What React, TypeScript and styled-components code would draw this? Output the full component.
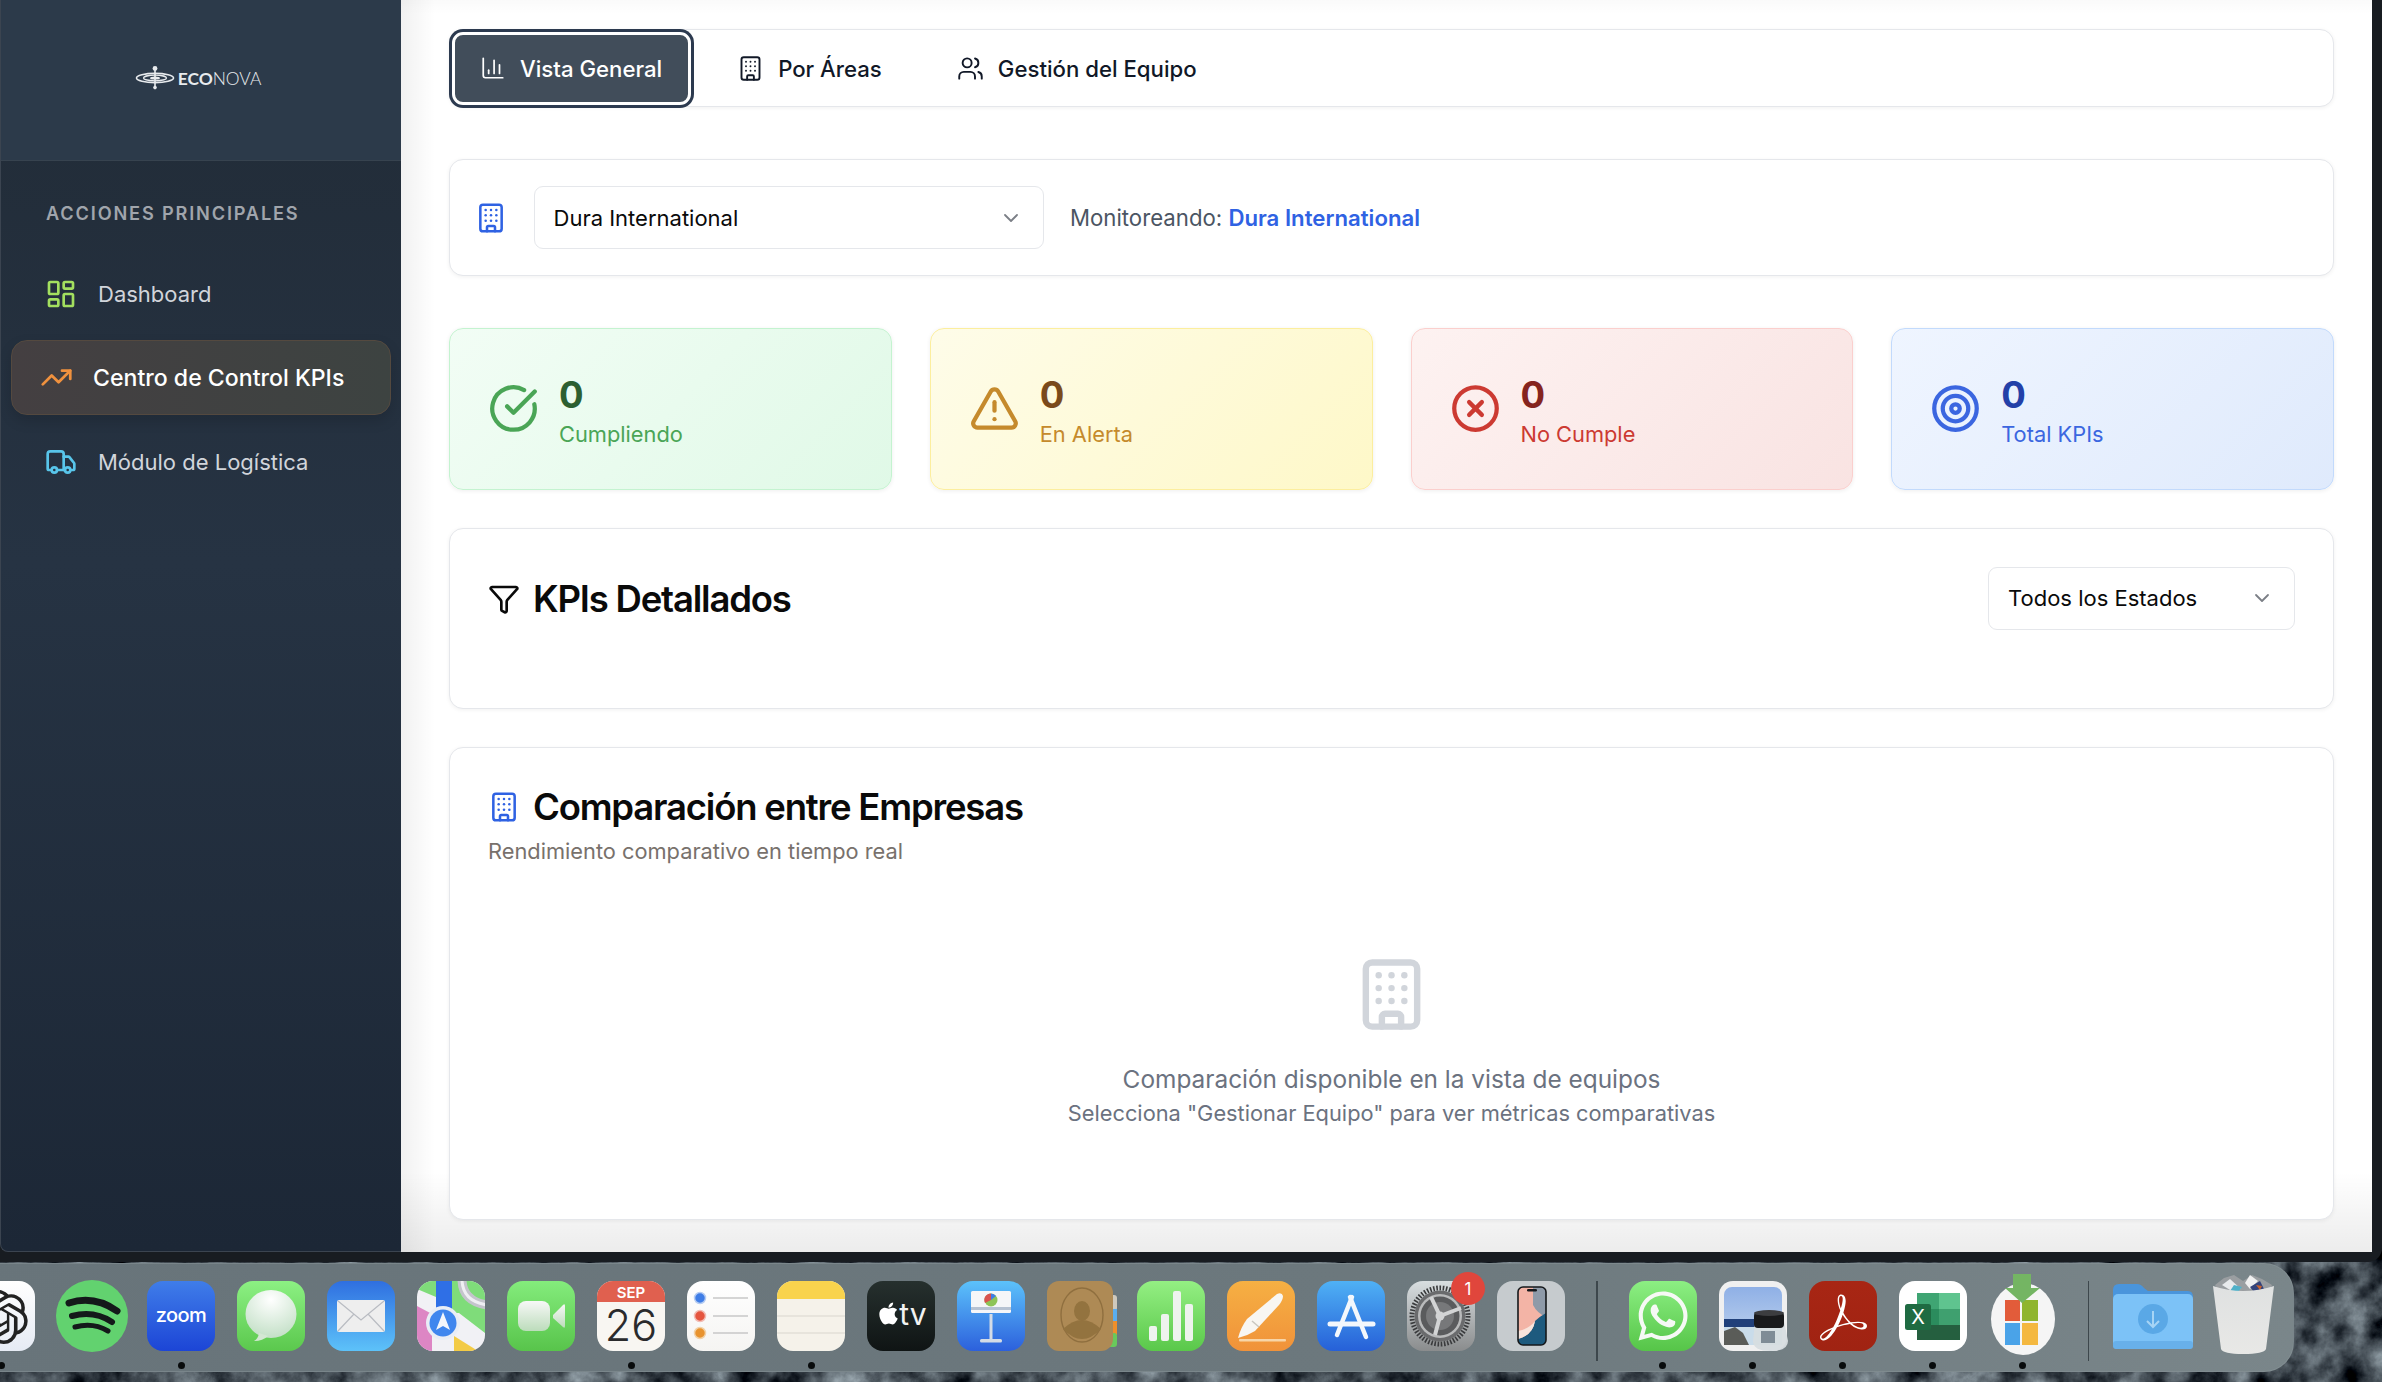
import React from 'react'
import styled, { createGlobalStyle } from 'styled-components'
import {
  Building,
  ChartColumn,
  ChevronDown,
  CircleCheckBig,
  CircleX,
  Funnel,
  LayoutDashboard,
  Target,
  TrendingUp,
  TriangleAlert,
  Truck,
  Users,
} from 'lucide-react'
import { FaApple, FaWhatsapp } from 'react-icons/fa'
import { SiAdobeacrobatreader, SiOpenai } from 'react-icons/si'

const GlobalStyle = createGlobalStyle`
  html, body {
    margin: 0;
    padding: 0;
    width: 2382px;
    height: 1382px;
    overflow: hidden;
    background: #2a363b;
    font-family: Inter, "Liberation Sans", sans-serif;
  }
`

const Screen = styled.div`
  position: relative;
  width: 2382px;
  height: 1382px;
  overflow: hidden;
  display: flex;
  flex-direction: column;
  background: #2c383d;
`
const Wallpaper = styled.svg`
  position: absolute;
  inset: 0;
  width: 100%;
  height: 100%;
`
const Window = styled.div`
  position: relative;
  display: flex;
  height: 1252px;
  padding-right: 10px;
  border-bottom: 10px solid #181c21;
  border-bottom-right-radius: 14px;
  background: #181c21;
`
const Sidebar = styled.aside`
  width: 401px;
  flex-shrink: 0;
  display: flex;
  flex-direction: column;
  box-sizing: border-box;
  border-left: 1px solid #3b4450;
  border-bottom: 1px solid #3b4450;
  border-bottom-left-radius: 8px;
  background: linear-gradient(180deg, #212b36 0%, #263343 45%, #1c2736 100%);
`
const SidebarHeader = styled.div`
  height: 161px;
  flex-shrink: 0;
  display: flex;
  align-items: center;
  justify-content: center;
  gap: 3px;
  padding-right: 6px;
  padding-bottom: 4px;
  box-sizing: border-box;
  background: #2c3a4a;
  border-bottom: 1px solid #37434f;
`
const LogoText = styled.span`
  font-family: Lato, Inter, sans-serif;
  font-size: 17.4px;
  font-weight: 300;
  color: #e8ebee;

  b {
    font-weight: 700;
  }
`
const SectionLabel = styled.div`
  margin: 41px 0 32px 45px;
  font-size: 18.2px;
  line-height: 22px;
  font-weight: 600;
  letter-spacing: 0.1em;
  color: #a0a5ac;
  text-transform: uppercase;
`
const Nav = styled.nav`
  display: flex;
  flex-direction: column;
  gap: 9px;
  padding: 0 10px;
`
const NavItem = styled.div<{ $active?: boolean }>`
  height: 75px;
  box-sizing: border-box;
  display: flex;
  align-items: center;
  gap: ${(p) => (p.$active ? '20px' : '21px')};
  padding-left: ${(p) => (p.$active ? '28px' : '33px')};
  border-radius: 16px;
  font-size: ${(p) => (p.$active ? '23.1px' : '22px')};
  font-weight: ${(p) => (p.$active ? 500 : 400)};
  color: ${(p) => (p.$active ? '#ffffff' : '#d1d5db')};
  border: 1px solid ${(p) => (p.$active ? '#54493f' : 'transparent')};
  background: ${(p) => (p.$active ? 'linear-gradient(90deg, #443f41, #3d4341)' : 'transparent')};
  box-shadow: ${(p) => (p.$active ? '0 6px 14px rgba(0, 0, 0, 0.14)' : 'none')};
`
const Main = styled.main`
  flex: 1;
  min-width: 0;
  display: flex;
  flex-direction: column;
  gap: 38px;
  padding: 29px 38px 0 48px;
  box-sizing: border-box;
  background: linear-gradient(to top, rgba(0, 0, 0, 0.075), transparent 80px),
    linear-gradient(to right, rgba(0, 0, 0, 0.055), transparent 34px),
    linear-gradient(to bottom, rgba(0, 0, 0, 0.02), transparent 14px), #ffffff;
`
const Card = styled.section`
  box-sizing: border-box;
  background: #ffffff;
  border: 1.5px solid #e5e7eb;
  border-radius: 14px;
  box-shadow: 0 1px 4px rgba(0, 0, 0, 0.06);
`
const TabsCard = styled(Card)`
  height: 78px;
  flex-shrink: 0;
  margin-bottom: 14px;
  display: flex;
  gap: 15px;
`
const Tab = styled.div<{ $active?: boolean }>`
  display: flex;
  align-items: center;
  gap: 14px;
  padding: 0 30px;
  box-sizing: border-box;
  font-size: 22.2px;
  font-weight: 500;
  color: ${(p) => (p.$active ? '#ffffff' : '#111827')};
  ${(p) =>
    p.$active &&
    `
    margin: 1.5px;
    padding: 0 25.5px;
    background: #414d5a;
    border-radius: 11px;
    border: 3px solid #ffffff;
    box-shadow: 0 0 0 3px #2c3a4f;
  `}
`
const CompanyCard = styled(Card)`
  height: 117px;
  flex-shrink: 0;
  margin-bottom: 13.5px;
  display: flex;
  align-items: center;
  gap: 26.5px;
  padding-left: 25px;
`
const SelectBox = styled.div<{ $width: number }>`
  width: ${(p) => p.$width}px;
  height: 63px;
  box-sizing: border-box;
  display: flex;
  align-items: center;
  justify-content: space-between;
  padding: 0 20px 0 19px;
  border: 1.5px solid #e5e7eb;
  border-radius: 9px;
  background: #ffffff;
  font-size: 22px;
  color: #0a0a0a;
`
const Monitor = styled.div`
  font-size: 22.2px;
  color: #4b5563;

  strong {
    font-weight: 600;
    color: #2f62e3;
  }
`
const StatsGrid = styled.div`
  display: grid;
  grid-template-columns: repeat(4, 1fr);
  gap: 38px;
  height: 162px;
  flex-shrink: 0;
`
const tones = {
  green: { from: '#f2fdf5', to: '#e0f9e7', border: '#c4f3d0', num: '#2c5f31', label: '#4aa556' },
  yellow: { from: '#fefce9', to: '#fef8c8', border: '#fcee9e', num: '#7a4a1b', label: '#c58a2c' },
  red: { from: '#fdf2f1', to: '#f9e3e2', border: '#fbcfcd', num: '#85241e', label: '#cc3a32' },
  blue: { from: '#eff5ff', to: '#dfeafc', border: '#c2dafc', num: '#2340a8', label: '#3b66e0' },
}
type Tone = keyof typeof tones

const StatCard = styled.div<{ $tone: Tone }>`
  box-sizing: border-box;
  display: flex;
  align-items: center;
  gap: 20px;
  padding-left: 38px;
  border-radius: 14px;
  border: 1.5px solid ${(p) => tones[p.$tone].border};
  background: linear-gradient(135deg, ${(p) => tones[p.$tone].from}, ${(p) => tones[p.$tone].to});
  box-shadow: 0 1px 4px rgba(0, 0, 0, 0.07);
  color: ${(p) => tones[p.$tone].label};
`
const StatBody = styled.div`
  display: flex;
  flex-direction: column;
  gap: 2px;
  padding-top: 4px;
`
const StatNumber = styled.div<{ $tone: Tone }>`
  font-size: 36.5px;
  line-height: 44px;
  font-weight: 700;
  color: ${(p) => tones[p.$tone].num};
`
const StatLabel = styled.div`
  font-size: 21.8px;
  line-height: 30px;
`
const KpiCard = styled(Card)`
  height: 181px;
  flex-shrink: 0;
  display: flex;
  justify-content: space-between;
  align-items: flex-start;
  padding: 38px 38px 0 38px;
`
const TitleRow = styled.div`
  display: flex;
  align-items: center;
  gap: 13px;
  min-height: 44px;
  color: #0a0a0a;
`
const KpiTitleRow = styled(TitleRow)`
  min-height: 65px;
`
const CardTitle = styled.h2`
  margin: 0;
  font-size: 36.5px;
  line-height: 44px;
  font-weight: 600;
  letter-spacing: -0.033em;
  color: #0a0a0a;
`
const CompareCard = styled(Card)`
  height: 473px;
  flex-shrink: 0;
  display: flex;
  flex-direction: column;
  padding: 37px 38px 0 38px;
`
const SubTitle = styled.div`
  margin-top: 7.5px;
  font-size: 21.8px;
  line-height: 30px;
  color: #78716c;
`
const Empty = styled.div`
  margin-top: 90px;
  display: flex;
  flex-direction: column;
  align-items: center;
  color: #6b7280;
`
const EmptyTitle = styled.div`
  margin-top: 28px;
  font-size: 24.4px;
  line-height: 36px;
`
const EmptyHint = styled.div`
  font-size: 21.8px;
  line-height: 32px;
`
const Dock = styled.div`
  position: relative;
  width: 2354px;
  height: 109px;
  margin-top: 1px;
  margin-left: -60px;
  padding: 17px 0 0 26px;
  box-sizing: border-box;
  display: flex;
  gap: 22px;
  border: 1.5px solid #8a959982;
  border-radius: 0 30px 30px 0;
  background: linear-gradient(90deg, #68747a 0%, #6c787d 60%, #7a868a 100%);
`
const DockItem = styled.div`
  position: relative;
  width: 68px;
  flex-shrink: 0;
  display: flex;
  flex-direction: column;
  align-items: center;
  gap: 11px;

  svg {
    overflow: visible;
    display: block;
  }
`
const RunDot = styled.span<{ $on?: boolean }>`
  width: 7px;
  height: 7px;
  border-radius: 50%;
  background: ${(p) => (p.$on ? '#080b0c' : 'transparent')};
`
const DockDivider = styled.div`
  width: 1.5px;
  height: 80px;
  margin: 0 9px;
  flex-shrink: 0;
  background: #3d474c;
`
const Badge = styled.span`
  position: absolute;
  top: -9px;
  right: -10px;
  width: 34px;
  height: 33px;
  border-radius: 50%;
  display: flex;
  align-items: center;
  justify-content: center;
  background: #e0463c;
  color: #ffffff;
  font-size: 17px;
`

const EconovaMark = () => (
  <svg width="40" height="24" viewBox="0 0 40 24" fill="none">
    <ellipse cx="20" cy="12" rx="18.5" ry="4.6" stroke="#e8ebee" strokeWidth="1.6" />
    <ellipse cx="20" cy="12" rx="11.5" ry="2.8" stroke="#e8ebee" strokeWidth="1.3" />
    <ellipse cx="20" cy="12" rx="5" ry="1.6" fill="#e8ebee" />
    <circle cx="20" cy="2.4" r="2.4" fill="#e8ebee" />
    <rect x="19.2" y="3" width="1.6" height="19" fill="#e8ebee" />
    <circle cx="20" cy="21.6" r="1.8" fill="#e8ebee" />
  </svg>
)

type TileProps = { id: string; from: string; to: string; children?: React.ReactNode }
const Tile = ({ id, from, to, children }: TileProps) => (
  <svg width="68" height="70" viewBox="0 0 68 70">
    <defs>
      <linearGradient id={id} x1="0" y1="0" x2="0" y2="1">
        <stop offset="0" stopColor={from} />
        <stop offset="1" stopColor={to} />
      </linearGradient>
    </defs>
    <rect width="68" height="70" rx="16" fill={`url(#${id})`} />
    {children}
  </svg>
)

const SpotifyIcon = () => (
  <svg width="68" height="70" viewBox="0 0 68 70" fill="none">
    <ellipse cx="35" cy="35" rx="36" ry="36" fill="#62d26f" />
    <g stroke="#14191a" strokeLinecap="round">
      <path d="M12 22 Q37 14 60 30" strokeWidth="7" />
      <path d="M15 35 Q37 29 55 41" strokeWidth="6" />
      <path d="M18 46 Q36 41 51 50" strokeWidth="5" />
    </g>
  </svg>
)

const dockApps: { name: string; on?: boolean; badge?: string; icon: React.ReactNode; divider?: boolean }[] = [
  {
    name: 'chatgpt',
    on: true,
    icon: (
      <Tile id="gpt" from="#ffffff" to="#e6ebf4">
        <SiOpenai x="7" y="9" size={54} color="#222" />
      </Tile>
    ),
  },
  { name: 'spotify', icon: <SpotifyIcon /> },
  {
    name: 'zoom',
    on: true,
    icon: (
      <Tile id="zoom" from="#3f7de9" to="#1c45d6">
        <text x="34" y="41" textAnchor="middle" fontFamily="Inter" fontSize="20" fontWeight="500" fill="#fff" letterSpacing="-0.6">
          zoom
        </text>
      </Tile>
    ),
  },
  {
    name: 'messages',
    icon: (
      <Tile id="msg" from="#8cf083" to="#5bc84d">
        <defs>
          <radialGradient id="bubble" cx="0.5" cy="0.2" r="0.9">
            <stop offset="0" stopColor="#ffffff" />
            <stop offset="1" stopColor="#bcdcc0" />
          </radialGradient>
        </defs>
        <ellipse cx="34" cy="33" rx="25.5" ry="24" fill="url(#bubble)" />
        <path d="M22 52 Q21 58 17 60 Q26 60 31 55Z" fill="#d4e7d4" />
      </Tile>
    ),
  },
  {
    name: 'mail',
    icon: (
      <Tile id="mail" from="#2f6fe0" to="#5dc2f9">
        <rect x="10" y="19" width="48" height="32" rx="2" fill="#eeeeee" />
        <path d="M11 20 L34 39 L57 20 M11 50 L27 33 M57 50 L41 33" stroke="#b9bcc2" strokeWidth="1.2" fill="none" />
      </Tile>
    ),
  },
  {
    name: 'maps',
    icon: (
      <svg width="68" height="70" viewBox="0 0 68 70">
        <defs>
          <clipPath id="mapclip">
            <rect width="68" height="70" rx="16" />
          </clipPath>
        </defs>
        <g clipPath="url(#mapclip)">
          <rect width="68" height="70" fill="#f1f1f5" />
          <path d="M0 0 H19 V16 L0 8Z" fill="#7fdc7a" />
          <path d="M35 0 H68 V52 L42 32 H35Z" fill="#7fdc7a" />
          <path d="M0 25 L15 33 V70 H0Z" fill="#dd86c4" />
          <path d="M37 70 V55 L61 70Z" fill="#f3cb45" />
          <rect x="19" y="0" width="16" height="34" fill="#2f6fe6" />
          <path d="M45 -2 Q45 20 70 24" stroke="#c4c4cc" strokeWidth="9" fill="none" />
          <path d="M45 -2 Q45 20 70 24" stroke="#efeff3" strokeWidth="3" fill="none" />
          <circle cx="26" cy="42" r="17" fill="#e9edf5" />
          <circle cx="26" cy="42" r="13.5" fill="#3f86ee" />
          <path d="M26 31 L33 49 L26 45 L19 49Z" fill="#f3f6fb" />
        </g>
      </svg>
    ),
  },
  {
    name: 'facetime',
    icon: (
      <Tile id="ft" from="#84ec7c" to="#58c44b">
        <defs>
          <linearGradient id="ftcam" x1="0" y1="0" x2="0" y2="1">
            <stop offset="0" stopColor="#f7f8f7" />
            <stop offset="1" stopColor="#bcdcbb" />
          </linearGradient>
        </defs>
        <rect x="11" y="20" width="32" height="30" rx="8" fill="url(#ftcam)" />
        <path d="M46 34 L56 24 Q58 22 58 25 V45 Q58 48 56 46 L46 37Z" fill="url(#ftcam)" />
      </Tile>
    ),
  },
  {
    name: 'calendar',
    on: true,
    icon: (
      <svg width="68" height="70" viewBox="0 0 68 70">
        <defs>
          <clipPath id="calclip">
            <rect width="68" height="70" rx="16" />
          </clipPath>
        </defs>
        <g clipPath="url(#calclip)">
          <rect width="68" height="70" fill="#f8f6f2" />
          <rect width="68" height="21" fill="#e0604f" />
          <text x="34" y="17" textAnchor="middle" fontFamily="Inter" fontSize="15" fontWeight="600" fill="#fff">
            SEP
          </text>
          <text x="34" y="60" textAnchor="middle" fontFamily="Inter" fontSize="43" fontWeight="300" fill="#2a2a2c">
            26
          </text>
        </g>
      </svg>
    ),
  },
  {
    name: 'reminders',
    icon: (
      <Tile id="rem" from="#ffffff" to="#f5f4f2">
        <circle cx="13" cy="17" r="5.5" fill="#3f7de6" stroke="#b7cdf2" strokeWidth="1.5" />
        <circle cx="13" cy="35" r="5.5" fill="#e5553f" stroke="#f2bdb5" strokeWidth="1.5" />
        <circle cx="13" cy="52" r="5.5" fill="#e8932f" stroke="#f2d2a8" strokeWidth="1.5" />
        <path d="M26 17 H61 M26 35 H61 M26 52 H61" stroke="#c8c8c8" strokeWidth="1.5" />
      </Tile>
    ),
  },
  {
    name: 'notes',
    on: true,
    icon: (
      <svg width="68" height="70" viewBox="0 0 68 70">
        <defs>
          <clipPath id="noteclip">
            <rect width="68" height="70" rx="16" />
          </clipPath>
        </defs>
        <g clipPath="url(#noteclip)">
          <rect width="68" height="70" fill="#f5f2ea" />
          <rect width="68" height="18" fill="#f9d34d" />
          <path d="M0 35 H68 M0 52 H68" stroke="#d9d6cd" strokeWidth="1.2" />
        </g>
      </svg>
    ),
  },
  {
    name: 'tv',
    icon: (
      <Tile id="tv" from="#26302e" to="#0f1414">
        <FaApple x="9" y="20" size={25} color="#fff" />
        <text x="46" y="44" textAnchor="middle" fontFamily="Inter" fontSize="30" fontWeight="400" fill="#f2f2f2">
          tv
        </text>
      </Tile>
    ),
  },
  {
    name: 'keynote',
    icon: (
      <Tile id="key" from="#5cc2fb" to="#2c60dc">
        <rect x="14" y="10" width="40" height="22" rx="1.5" fill="#f5f6f8" />
        <rect x="14" y="26" width="40" height="3" fill="#b6c2d2" />
        <circle cx="34" cy="19" r="6.5" fill="#8dc457" />
        <path d="M34 19 V12.5 A6.5 6.5 0 0 0 28 22Z" fill="#d9534f" />
        <path d="M34 19 V12.5 A6.5 6.5 0 0 1 39 15Z" fill="#3f7de6" />
        <rect x="32.5" y="33" width="3" height="26" fill="#d4dce6" />
        <rect x="23" y="58" width="22" height="3.5" rx="1.5" fill="#d4dce6" />
      </Tile>
    ),
  },
  {
    name: 'contacts',
    icon: (
      <svg width="68" height="70" viewBox="0 0 68 70">
        <rect x="60" y="14" width="10" height="16" rx="3" fill="#cfc9bd" />
        <rect x="60" y="28" width="10" height="14" fill="#5aaef0" />
        <rect x="60" y="40" width="10" height="14" fill="#ee8f2b" />
        <rect x="60" y="52" width="10" height="14" rx="3" fill="#69c95b" />
        <rect width="66" height="70" rx="12" fill="#ae8a55" />
        <ellipse cx="35" cy="34" rx="21" ry="27" fill="none" stroke="#8f6f3f" strokeWidth="1.4" />
        <ellipse cx="35" cy="30" rx="8" ry="10" fill="#93733f" />
        <path d="M16 48 Q35 30 54 48 Q35 68 16 48Z" fill="#93733f" />
      </svg>
    ),
  },
  {
    name: 'numbers',
    icon: (
      <Tile id="num" from="#94ef83" to="#5ac84a">
        <rect x="12" y="45" width="8" height="15" rx="2" fill="#eef3ee" />
        <rect x="24" y="33" width="8" height="27" rx="2" fill="#eef3ee" />
        <rect x="36" y="10" width="8" height="50" rx="2" fill="#eef3ee" />
        <rect x="48" y="23" width="8" height="37" rx="2" fill="#eef3ee" />
      </Tile>
    ),
  },
  {
    name: 'pages',
    icon: (
      <Tile id="pag" from="#f6b043" to="#f0923a">
        <path d="M11 57 Q14 46 20 38 L50 13 Q55 11 56 15 Q56 19 52 24 L28 50 Q20 55 11 57Z" fill="#f8f6f2" />
        <path d="M25 40 L32 46" stroke="#c9c6bf" strokeWidth="1.5" />
        <rect x="12" y="58" width="47" height="2.5" rx="1" fill="#f7d5a8" />
      </Tile>
    ),
  },
  {
    name: 'appstore',
    icon: (
      <Tile id="app" from="#4fb1f5" to="#2660d8">
        <g stroke="#f3f7fc" strokeLinecap="round" fill="none">
          <path d="M35 16 L20 54" strokeWidth="4.5" />
          <path d="M33 16 L49 56" strokeWidth="4.5" />
          <path d="M13 43 H56" strokeWidth="5" />
        </g>
      </Tile>
    ),
  },
  {
    name: 'settings',
    badge: '1',
    icon: (
      <Tile id="set" from="#d8dee0" to="#8a8c8d">
        <circle cx="33" cy="35" r="28" fill="none" stroke="#3a3b3d" strokeWidth="5" strokeDasharray="1.6 1.6" />
        <circle cx="33" cy="35" r="25.5" fill="#6a6b6d" />
        <circle cx="33" cy="35" r="22" fill="#b9babb" />
        <circle cx="33" cy="35" r="19.5" fill="#5a5b5d" />
        <circle cx="33" cy="35" r="14" fill="#77787a" />
        <path d="M33 35 L24 16 M33 35 L54 27 M33 35 L28 54" stroke="#d3d4d5" strokeWidth="4" />
        <circle cx="33" cy="35" r="4.5" fill="#d3d4d5" />
      </Tile>
    ),
  },
  {
    name: 'iphone',
    icon: (
      <svg width="68" height="70" viewBox="0 0 68 70">
        <defs>
          <clipPath id="iphclip">
            <rect x="21" y="6" width="28" height="58" rx="5" />
          </clipPath>
        </defs>
        <rect width="68" height="70" rx="16" fill="#c6cbce" />
        <g clipPath="url(#iphclip)">
          <rect x="21" y="6" width="28" height="58" fill="#f3b4a6" />
          <path d="M36 6 H49 V36 Q40 32 36 24Z" fill="#8e9aa8" />
          <path d="M49 32 V64 H21 V58 Q36 54 38 40 Q42 36 49 32Z" fill="#1d5a7e" />
          <path d="M38 40 Q36 54 21 58 V50 Q32 48 38 40Z" fill="#f7e4dc" />
        </g>
        <rect x="21" y="6" width="28" height="58" rx="5" fill="none" stroke="#15181b" strokeWidth="1.6" />
        <rect x="30" y="8" width="10" height="2.6" rx="1.3" fill="#15181b" />
      </svg>
    ),
  },
  {
    name: 'whatsapp',
    on: true,
    divider: true,
    icon: (
      <Tile id="wa" from="#8cef83" to="#56c548">
        <FaWhatsapp x="6" y="7" size={56} color="#f6f9f5" />
      </Tile>
    ),
  },
  {
    name: 'preview',
    on: true,
    icon: (
      <svg width="68" height="70" viewBox="0 0 68 70">
        <defs>
          <linearGradient id="sky" x1="0" y1="0" x2="0" y2="1">
            <stop offset="0" stopColor="#8fb0e6" />
            <stop offset="1" stopColor="#c3d6ee" />
          </linearGradient>
        </defs>
        <rect width="68" height="70" rx="14" fill="#f0f0f0" />
        <rect x="5" y="6" width="58" height="58" rx="8" fill="url(#sky)" />
        <rect x="5" y="38" width="58" height="8" fill="#20407a" />
        <rect x="5" y="46" width="58" height="18" fill="#c9dcea" />
        <path d="M5 50 L16 46 L24 52 L30 64 H5Z" fill="#5a5c58" />
        <path d="M36 40 H65 L69 60 Q69 70 52 70 Q34 70 34 60Z" fill="#d7dde0" opacity="0.95" />
        <rect x="35" y="31" width="30" height="16" rx="4" fill="#18191b" />
        <ellipse cx="50" cy="32" rx="15" ry="3" fill="#3c3d40" />
        <rect x="42" y="50" width="14" height="12" fill="#7f8c96" />
      </svg>
    ),
  },
  {
    name: 'acrobat',
    on: true,
    icon: (
      <Tile id="acr" from="#a82614" to="#a02312">
        <SiAdobeacrobatreader x="11" y="13" size={47} color="#ffffff" />
      </Tile>
    ),
  },
  {
    name: 'excel',
    on: true,
    icon: (
      <Tile id="xl" from="#ffffff" to="#ffffff">
        <rect x="18" y="12" width="43" height="47" rx="2.5" fill="#2b8c5d" />
        <rect x="40" y="12" width="21" height="16" fill="#5fc48f" />
        <rect x="18" y="12" width="22" height="16" fill="#3fa573" />
        <rect x="40" y="28" width="21" height="16" fill="#3fa06f" />
        <rect x="18" y="44" width="43" height="15" fill="#255f3f" />
        <rect x="6" y="23" width="26" height="26" rx="2.5" fill="#1f6b42" />
        <text x="19" y="43" textAnchor="middle" fontFamily="Inter" fontSize="20" fontWeight="400" fill="#fff">
          X
        </text>
      </Tile>
    ),
  },
  {
    name: 'msinstaller',
    on: true,
    icon: (
      <svg width="68" height="70" viewBox="0 0 68 70">
        <ellipse cx="34" cy="38" rx="32" ry="36" fill="#f5f5f5" />
        <rect x="16" y="19" width="15" height="21" fill="#e25c3a" />
        <rect x="33" y="19" width="16" height="21" fill="#8fb52f" />
        <rect x="16" y="42" width="15" height="22" fill="#4aa3e8" />
        <rect x="33" y="42" width="16" height="22" fill="#f4b840" />
        <path d="M24 -7 H42 V7 H51 L33 22 L16 7 H24Z" fill="#74b563" />
      </svg>
    ),
  },
  {
    name: 'downloads',
    divider: true,
    icon: (
      <svg width="68" height="70" viewBox="0 0 68 70">
        <path d="M-7 9 Q-7 3 -1 3 H17 Q21 3 24 7 L28 10 H68 Q73 10 73 16 V30 H-7Z" fill="#4a95dc" />
        <rect x="-7" y="13" width="80" height="55" rx="5" fill="#7cc2f7" />
        <rect x="-7" y="60" width="80" height="8" rx="3" fill="#68b0ea" />
        <circle cx="33" cy="38" r="15" fill="#5aa8e6" />
        <path d="M33 30 V46 M27 40 L33 46 L39 40" stroke="#a6d4f5" strokeWidth="2" fill="none" />
      </svg>
    ),
  },
  {
    name: 'trash',
    icon: (
      <svg width="68" height="70" viewBox="0 0 68 70">
        <defs>
          <linearGradient id="bin" x1="0" y1="0" x2="0" y2="1">
            <stop offset="0" stopColor="#dfe1e1" />
            <stop offset="1" stopColor="#e8e8e6" />
          </linearGradient>
        </defs>
        <path d="M5 4 L14 -3 L24 -6 L33 0 L42 -6 L52 -2 L62 4 L58 12 H10Z" fill="#9a9ea1" />
        <path d="M20 -2 L31 8 L20 9 L12 4Z" fill="#e8eaec" />
        <path d="M24 4 L32 6 L28 11 L20 10Z" fill="#4fb0c8" />
        <path d="M40 -6 L48 0 L40 8 L35 2Z" fill="#f0f0f0" />
        <path d="M40 6 L50 0 L54 8 L44 11Z" fill="#33427a" />
        <path d="M46 4 L52 5 L50 9 Z" fill="#c9632f" />
        <path d="M3 5 Q33 15 64 5 L56 68 Q54 73 33 73 Q13 73 11 68Z" fill="url(#bin)" />
      </svg>
    ),
  },
]

const App = () => {
  return (
    <Screen>
      <GlobalStyle />
      <Wallpaper>
        <filter id="rocks" colorInterpolationFilters="sRGB">
          <feTurbulence type="fractalNoise" baseFrequency="0.03" numOctaves="5" seed="4" />
          <feColorMatrix values="0.95 0 0 0 -0.22  1 0 0 0 -0.21  1 0 0 0 -0.18  0 0 0 0 1" />
        </filter>
        <rect width="100%" height="100%" filter="url(#rocks)" />
      </Wallpaper>

      <Window>
        <Sidebar>
          <SidebarHeader>
            <EconovaMark />
            <LogoText>
              <b>ECO</b>NOVA
            </LogoText>
          </SidebarHeader>
          <SectionLabel>Acciones Principales</SectionLabel>
          <Nav>
            <NavItem>
              <LayoutDashboard size={32} color="#a3e05f" />
              Dashboard
            </NavItem>
            <NavItem $active>
              <TrendingUp size={33} color="#f0913e" />
              Centro de Control KPIs
            </NavItem>
            <NavItem>
              <Truck size={32} color="#58c5ea" />
              Módulo de Logística
            </NavItem>
          </Nav>
        </Sidebar>

        <Main>
          <TabsCard>
            <Tab $active>
              <ChartColumn size={26} strokeWidth={1.6} />
              Vista General
            </Tab>
            <Tab>
              <Building size={27} strokeWidth={1.7} />
              Por Áreas
            </Tab>
            <Tab>
              <Users size={27} strokeWidth={1.7} />
              Gestión del Equipo
            </Tab>
          </TabsCard>

          <CompanyCard>
            <Building size={32} color="#2f62e3" strokeWidth={1.9} />
            <SelectBox $width={510}>
              Dura International
              <ChevronDown size={24} color="#7b7f86" strokeWidth={1.8} />
            </SelectBox>
            <Monitor>
              Monitoreando: <strong>Dura International</strong>
            </Monitor>
          </CompanyCard>

          <StatsGrid>
            <StatCard $tone="green">
              <CircleCheckBig size={51} strokeWidth={2} />
              <StatBody>
                <StatNumber $tone="green">0</StatNumber>
                <StatLabel>Cumpliendo</StatLabel>
              </StatBody>
            </StatCard>
            <StatCard $tone="yellow">
              <TriangleAlert size={51} strokeWidth={2} />
              <StatBody>
                <StatNumber $tone="yellow">0</StatNumber>
                <StatLabel>En Alerta</StatLabel>
              </StatBody>
            </StatCard>
            <StatCard $tone="red">
              <CircleX size={51} strokeWidth={2} />
              <StatBody>
                <StatNumber $tone="red">0</StatNumber>
                <StatLabel>No Cumple</StatLabel>
              </StatBody>
            </StatCard>
            <StatCard $tone="blue">
              <Target size={51} strokeWidth={2} />
              <StatBody>
                <StatNumber $tone="blue">0</StatNumber>
                <StatLabel>Total KPIs</StatLabel>
              </StatBody>
            </StatCard>
          </StatsGrid>

          <KpiCard>
            <KpiTitleRow>
              <Funnel size={32} strokeWidth={2} />
              <CardTitle>KPIs Detallados</CardTitle>
            </KpiTitleRow>
            <SelectBox $width={307}>
              Todos los Estados
              <ChevronDown size={24} color="#7b7f86" strokeWidth={1.8} />
            </SelectBox>
          </KpiCard>

          <CompareCard>
            <TitleRow>
              <Building size={32} color="#2f62e3" strokeWidth={1.9} />
              <CardTitle>Comparación entre Empresas</CardTitle>
            </TitleRow>
            <SubTitle>Rendimiento comparativo en tiempo real</SubTitle>
            <Empty>
              <Building size={77} color="#d1d5db" strokeWidth={2} />
              <EmptyTitle>Comparación disponible en la vista de equipos</EmptyTitle>
              <EmptyHint>Selecciona "Gestionar Equipo" para ver métricas comparativas</EmptyHint>
            </Empty>
          </CompareCard>
        </Main>
      </Window>

      <Dock>
        {dockApps.map((app) => (
          <React.Fragment key={app.name}>
            {app.divider && <DockDivider />}
            <DockItem>
              {app.icon}
              {app.badge && <Badge>{app.badge}</Badge>}
              <RunDot $on={app.on} />
            </DockItem>
          </React.Fragment>
        ))}
      </Dock>
    </Screen>
  )
}

export default App
